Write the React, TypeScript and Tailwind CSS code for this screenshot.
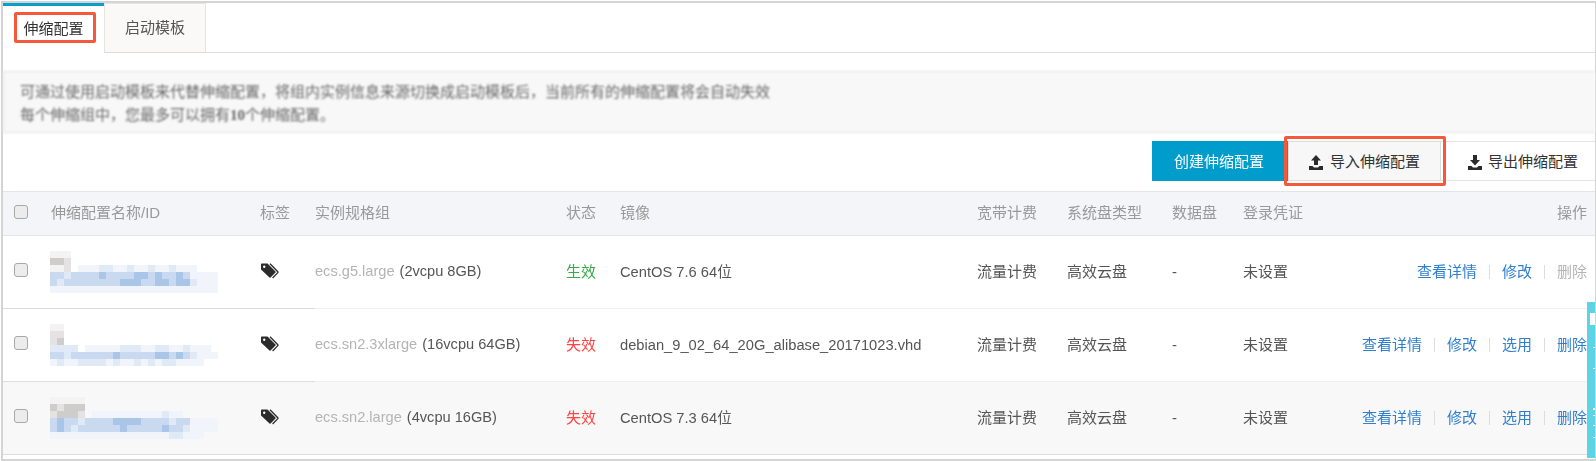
const MOSAIC_COLORS: Record<string, string> = {
  '.': 'transparent',
  a: '#f4f3f3',
  b: '#e4e2e2',
  c: '#cfcccc',
  '1': '#f1f5fb',
  '2': '#e0e9f6',
  '3': '#c9d9f0',
  '4': '#a9c5e8',
};

const ROWS = [
  {
    mosaic: [
      '.aaa.....................',
      '.ccb.....................',
      '.aab.11122112112112111...',
      '.332333343333443433431111',
      '.323333333344433443442111',
      '.111111111111111111111111',
    ],
    spec: 'ecs.g5.large',
    size: '(2vcpu 8GB)',
    status: '生效',
    ok: true,
    image: 'CentOS 7.6 64位',
    actions: ['查看详情', '修改', '删除'],
    bg: 'bg-white',
    lastRow: false,
  },
  {
    mosaic: [
      '.aa......................',
      '.bb......................',
      '.bc......................',
      '.2222.111112221122112111.',
      '.332333333433333443432111',
      '.1211222212112121221111..',
    ],
    spec: 'ecs.sn2.3xlarge',
    size: '(16vcpu 64GB)',
    status: '失效',
    ok: false,
    image: 'debian_9_02_64_20G_alibase_20171023.vhd',
    actions: ['查看详情', '修改', '选用', '删除'],
    bg: 'bg-white',
    lastRow: false,
  },
  {
    mosaic: [
      '.aaaaa...................',
      '.cbccc...................',
      '.bcccb.1111111111211.....',
      '.343323333444433332331111',
      '.343233333343333343321111',
      '.1111111111111111122111..',
    ],
    spec: 'ecs.sn2.large',
    size: '(4vcpu 16GB)',
    status: '失效',
    ok: false,
    image: 'CentOS 7.3 64位',
    actions: ['查看详情', '修改', '选用', '删除'],
    bg: 'bg-[#f8f8f8]',
    lastRow: true,
  },
];

const HEADERS = ['伸缩配置名称/ID', '标签', '实例规格组', '状态', '镜像', '宽带计费', '系统盘类型', '数据盘', '登录凭证'];

const GRID = 'grid grid-cols-[48px_209px_55px_251px_54px_357px_90px_105px_71px_100px_1fr] items-stretch';

function Checkbox() {
  return <input type="checkbox" className="appearance-none block w-[14px] h-[14px] rounded-[3px] border border-[#a8a8a8] bg-[#ececec] ml-[11px] mb-[4px]" />;
}

function TrayIcon({ up }: { up: boolean }) {
  return (
    <svg width="14" height="15" viewBox="0 0 14 15" fill="#2b2b2b" className="shrink-0">
      {up ? <path d="M7 0 12 5.5H9V10H5V5.5H2Z" /> : <path d="M5 0H9V5H12L7 10.5 2 5H5Z" />}
      <path d="M0 11H3.5L5 12.5H9L10.5 11H14V15H0Z" />
    </svg>
  );
}

function TagsIcon() {
  return (
    <svg width="19" height="16" viewBox="0 0 19 16" className="shrink-0 mb-[2px]">
      <path d="M1 1.2Q1 .5 1.7 .5H7.5L15.5 8.5Q16 9 15.5 9.5L10.5 14.6Q10 15.1 9.5 14.6L1 6.5Z" fill="#2b2b2b" />
      <circle cx="4.2" cy="3.8" r="1.2" fill="#fff" />
      <path d="M10 .8 17.8 8.8Q18.2 9.2 17.8 9.6L12.6 15" fill="none" stroke="#2b2b2b" strokeWidth="1.3" />
    </svg>
  );
}

function Mosaic({ rows }: { rows: string[] }) {
  return (
    <div className="flex flex-col -ml-2 blur-[0.3px]">
      {rows.map((row, i) => (
        <div key={i} className="flex">
          {row.split('').map((c, j) => (
            <span key={j} className="block w-[7px] h-[7px]" style={{ background: MOSAIC_COLORS[c] }} />
          ))}
        </div>
      ))}
    </div>
  );
}

export default function App() {
  return (
    <div className="relative w-[1596px] h-[461px] overflow-hidden bg-white text-[15px] text-[#555] font-['Liberation_Sans','Noto_Sans_CJK_SC',sans-serif]">
      <div className="h-[460px] mt-px ml-px border-t-2 border-l-2 border-r border-b-2 border-[#d4d4d4] box-border">
        {/* Tabs */}
        <div className="flex h-[50px] border-b border-[#dedede]">
          <div className="relative w-[101px] h-[50px] bg-white border-t-[3px] border-[#0a9fc9] flex items-center justify-center text-[#333]">
            <span className="blur-[0.3px]">伸缩配置</span>
            <div className="absolute left-[11px] top-[6px] w-[82px] h-[31px] border-[3px] border-[#f4593b] rounded-[2px]" />
          </div>
          <div className="w-[102px] h-[49px] bg-[#faf9f7] border border-b-0 border-[#e4e4e4] flex items-center justify-center blur-[0.3px]">
            启动模板
          </div>
        </div>

        {/* Notice */}
        <div className="mt-[18px] h-[62px] bg-[#f8f8f8] border-y border-l border-[#e2e2e2] pl-[16px] pt-[8px] leading-[23px] text-[#666] blur-[0.8px]">
          <p>可通过使用启动模板来代替伸缩配置，将组内实例信息来源切换成启动模板后，当前所有的伸缩配置将会自动失效</p>
          <p>
            每个伸缩组中，您最多可以拥有<b className="font-['Liberation_Serif','Noto_Sans_CJK_SC',serif]">10</b>个伸缩配置。
          </p>
        </div>

        {/* Toolbar */}
        <div className="flex justify-end mt-[8px] h-[40px]">
          <button className="w-[136px] bg-[#009ccc] text-white pr-[2px] pt-[3px]">
            <span className="blur-[0.3px]">创建伸缩配置</span>
          </button>
          <div className="relative w-[153px]">
            <button className="w-full h-full bg-[#f7f7f7] border border-[#dcdcdc] flex items-center justify-center gap-[7px] pt-[3px] text-[#333]">
              <TrayIcon up />
              导入伸缩配置
            </button>
            <div className="absolute -left-[4px] -top-[5px] -right-[5px] -bottom-[5px] border-[3px] border-[#f4593b] rounded-[2px]" />
          </div>
          <button className="w-[154px] border-y border-[#e4e4e4] flex items-center pl-[27px] gap-[6px] pt-[3px] text-[#333]">
            <TrayIcon up={false} />
            导出伸缩配置
          </button>
        </div>

        {/* Table */}
        <div className="mt-[10px]">
          <div className={`${GRID} h-[45px] bg-[#f4f5f9] border-y border-[#e2e4ea] text-[#999]`}>
            <div className="flex items-center">
              <Checkbox />
            </div>
            {HEADERS.map((h) => (
              <div key={h} className="flex items-center whitespace-nowrap blur-[0.3px]">
                {h}
              </div>
            ))}
            <div className="flex items-center justify-end pr-[8px] blur-[0.3px]">操作</div>
          </div>

          {ROWS.map((row) => {
            const leftLine = 'border-b border-[#dcdcdc]';
            const rightLine = row.lastRow ? 'border-b border-[#dcdcdc]' : 'border-b border-[#f0f0f0]';
            return (
              <div key={row.spec} className={`${GRID} h-[73px] ${row.bg}`}>
                <div className={`flex items-center ${leftLine}`}>
                  <Checkbox />
                </div>
                <div className={`flex items-center ${leftLine}`}>
                  <Mosaic rows={row.mosaic} />
                </div>
                <div className={`flex items-center ${leftLine}`}>
                  <TagsIcon />
                </div>
                <div className={`flex items-center gap-[5px] whitespace-nowrap text-[14.6px] ${rightLine}`}>
                  <span className="text-[#b4b4b4] blur-[0.6px]">{row.spec}</span>
                  <span className="blur-[0.6px]">{row.size}</span>
                </div>
                <div className={`flex items-center blur-[0.6px] ${rightLine} ${row.ok ? 'text-[#35aa47]' : 'text-[#f44]'}`}>{row.status}</div>
                <div className={`flex items-center whitespace-nowrap blur-[0.6px] text-[14.7px] ${rightLine}`}>{row.image}</div>
                <div className={`flex items-center blur-[0.6px] ${rightLine}`}>流量计费</div>
                <div className={`flex items-center blur-[0.6px] ${rightLine}`}>高效云盘</div>
                <div className={`flex items-center blur-[0.6px] ${rightLine}`}>-</div>
                <div className={`flex items-center blur-[0.6px] ${rightLine}`}>未设置</div>
                <div className={`flex items-center justify-end pr-[8px] gap-[12px] whitespace-nowrap blur-[0.6px] ${rightLine}`}>
                  {row.actions.map((a, i) => (
                    <div key={a} className="flex items-center gap-[12px]">
                      {i > 0 && <span className="w-px h-[14px] bg-[#ddd]" />}
                      <span className={a === '删除' && row.ok ? 'text-[#b4b4b4]' : 'text-[#2f7fd1]'}>{a}</span>
                    </div>
                  ))}
                </div>
              </div>
            );
          })}
        </div>
      </div>

      {/* Floating side widget */}
      <div className="absolute right-px top-[302px] w-[8px] h-[156px] bg-[#5bd5e6] flex flex-col items-end">
        <div className="w-[5px] h-[12px] bg-white mt-[11px]" />
        <div className="w-[2px] h-px bg-white mt-[22px]" />
        <div className="w-[2px] h-px bg-white mt-[20px]" />
        <div className="w-[2px] h-[2px] bg-white mt-[39px]" />
        <div className="w-[2px] h-px bg-white mt-[5px]" />
        <div className="w-[2px] h-px bg-white mt-[9px]" />
        <div className="w-[2px] h-px bg-white mt-[11px]" />
      </div>
    </div>
  );
}
